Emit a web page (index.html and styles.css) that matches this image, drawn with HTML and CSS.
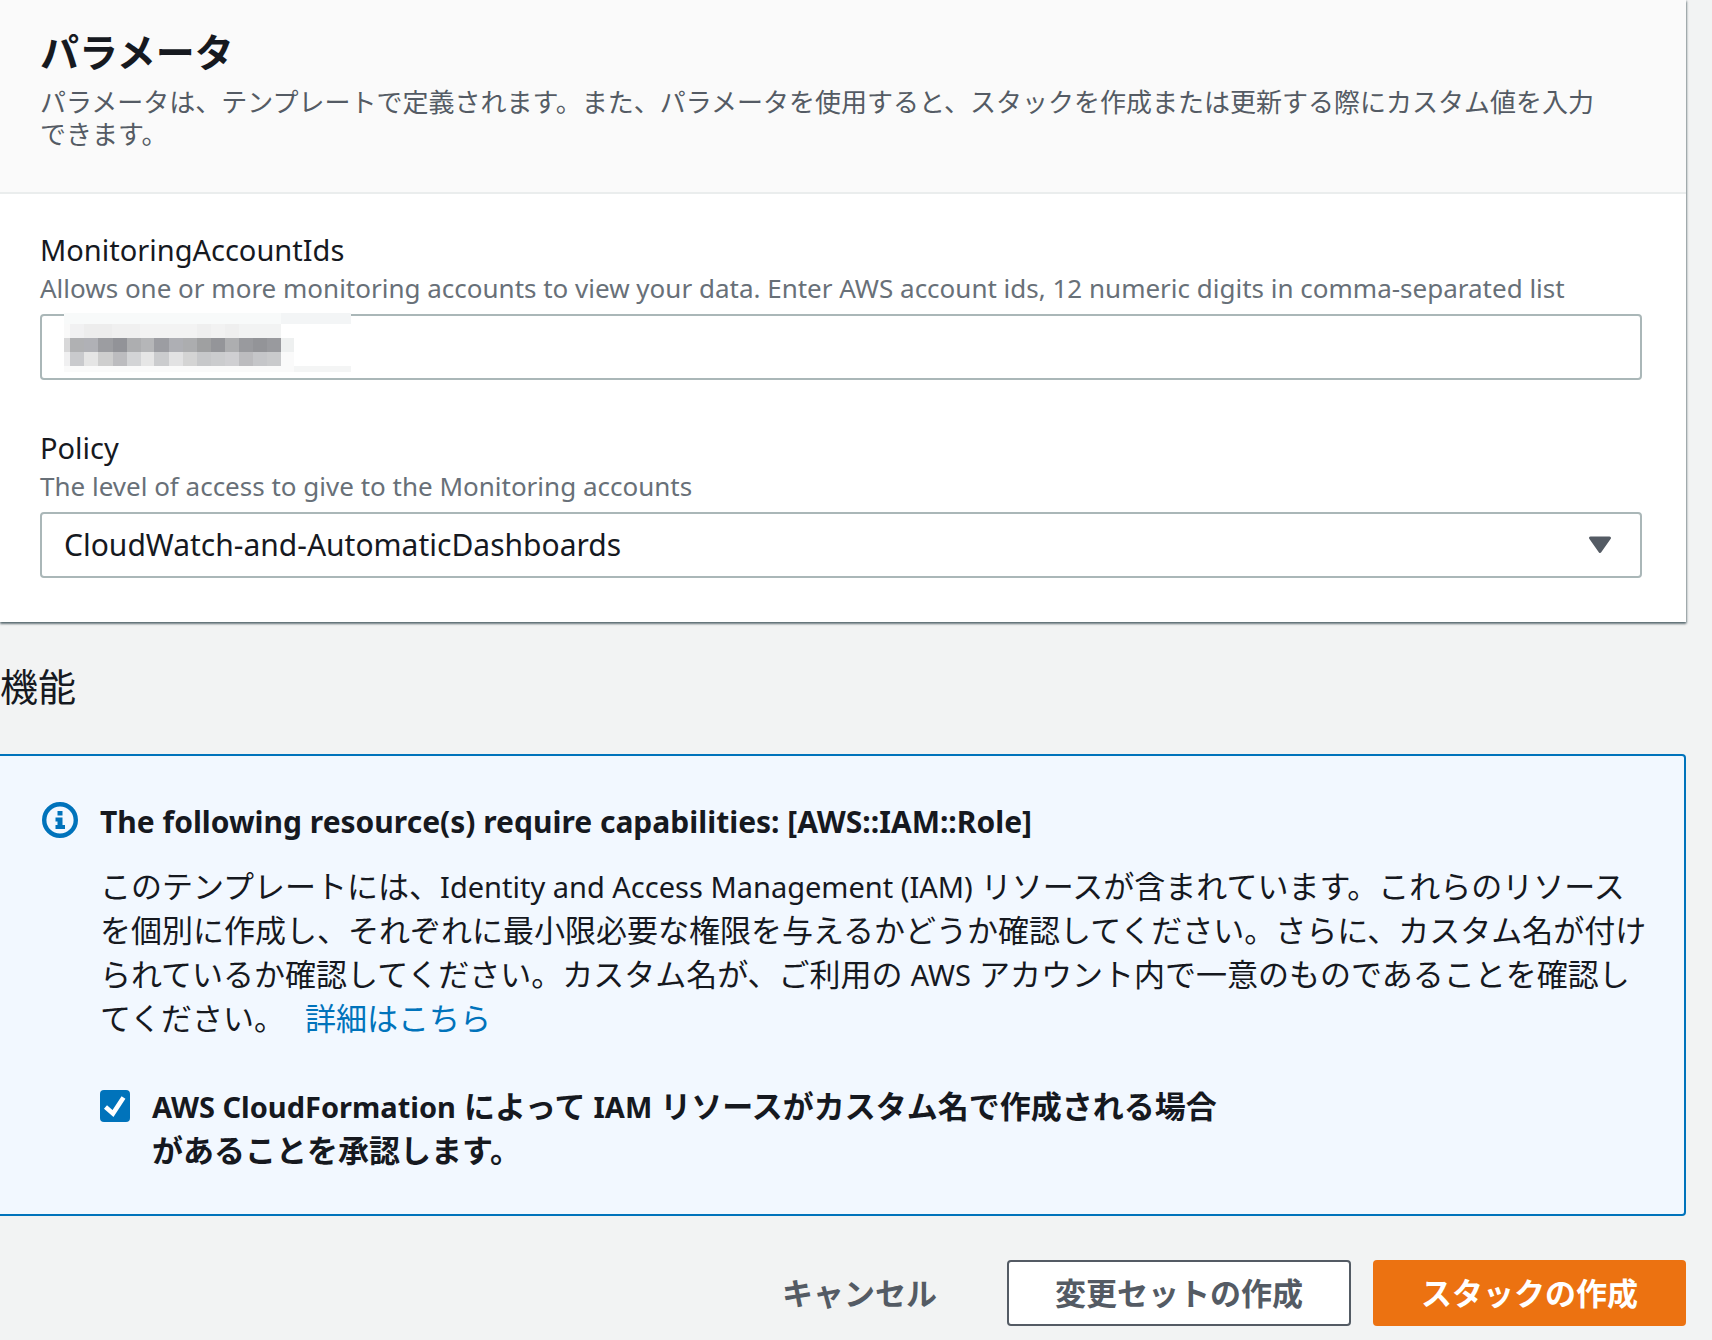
FILE: index.html
```html
<!DOCTYPE html>
<html lang="ja">
<head>
<meta charset="utf-8">
<meta name="viewport" content="width=device-width, initial-scale=1">
<title>スタックの作成</title>
<link rel="stylesheet" href="styles.css">
</head>
<body>
<main class="page">
  <section class="panel">
    <header class="panel-header">
      <h2 class="panel-title">パラメータ</h2>
      <p class="panel-description">パラメータは、テンプレートで定義されます。また、パラメータを使用すると、スタックを作成または更新する際にカスタム値を入力できます。</p>
    </header>
    <div class="panel-body">
      <div class="field">
        <label class="field-label" for="account-ids">MonitoringAccountIds</label>
        <p class="field-hint" id="account-ids-hint">Allows one or more monitoring accounts to view your data. Enter AWS account ids, 12 numeric digits in comma-separated list</p>
        <div class="control-wrap">
          <input class="control" type="text" id="account-ids" aria-describedby="account-ids-hint">
          <svg class="mosaic" width="287" height="59" viewBox="64 313 287 59" shape-rendering="crispEdges" aria-hidden="true">
            <path fill="#fff" d="M64 313h287v59H64z"/>
            <path fill="#f8fafa" d="M64 313h217v11H64z"/><path fill="#f3f5f6" d="M281 313h70v11h-70z"/>
            <path fill="#f9f9f9" d="M64 324h6v14h-6z"/>
            <path fill="#f1f1f2" d="M70 324h14v14H70z"/><path fill="#ededed" d="M84 324h28v14H84z"/><path fill="#f0f0f0" d="M112 324h28v14h-28z"/><path fill="#f3f3f3" d="M140 324h57v14h-57z"/><path fill="#efefef" d="M197 324h14v14h-14z"/><path fill="#f2f2f2" d="M211 324h14v14h-14z"/><path fill="#efefef" d="M225 324h14v14h-14z"/><path fill="#f2f3f3" d="M239 324h42v14h-42z"/>
            <path fill="#d8d8d9" d="M64 338h6v14h-6z"/><path fill="#b0b1b3" d="M70 338h14v14H70z"/><path fill="#b0b1b6" d="M84 338h14v14H84z"/><path fill="#9c9da1" d="M98 338h15v14H98z"/><path fill="#929398" d="M113 338h14v14h-14z"/><path fill="#adaeb0" d="M127 338h14v14h-14z"/><path fill="#b5b6b8" d="M141 338h13v14h-13z"/><path fill="#9c9da2" d="M154 338h15v14h-15z"/><path fill="#aeafb4" d="M169 338h14v14h-14z"/><path fill="#acadaf" d="M183 338h14v14h-14z"/><path fill="#9fa0a1" d="M197 338h14v14h-14z"/><path fill="#949599" d="M211 338h14v14h-14z"/><path fill="#adaeb0" d="M225 338h14v14h-14z"/><path fill="#999a9e" d="M239 338h14v14h-14z"/><path fill="#939498" d="M253 338h14v14h-14z"/><path fill="#999a9e" d="M267 338h14v14h-14z"/><path fill="#eef0f0" d="M281 338h13v14h-13z"/>
            <path fill="#f0f0f1" d="M64 352h6v14h-6z"/><path fill="#c9cacd" d="M70 352h14v14H70z"/><path fill="#e5e5e5" d="M84 352h14v14H84z"/><path fill="#cecece" d="M98 352h15v14H98z"/><path fill="#bcbcbf" d="M113 352h14v14h-14z"/><path fill="#d3d4d6" d="M127 352h14v14h-14z"/><path fill="#e6e6e6" d="M141 352h13v14h-13z"/><path fill="#cbccce" d="M154 352h15v14h-15z"/><path fill="#e2e2e3" d="M169 352h14v14h-14z"/><path fill="#d4d4d4" d="M183 352h14v14h-14z"/><path fill="#c7c8ca" d="M197 352h14v14h-14z"/><path fill="#cbccce" d="M211 352h14v14h-14z"/><path fill="#cfcfd2" d="M225 352h14v14h-14z"/><path fill="#bcbcbf" d="M239 352h14v14h-14z"/><path fill="#c5c6c9" d="M253 352h14v14h-14z"/><path fill="#c9cacc" d="M267 352h14v14h-14z"/><path fill="#fafafa" d="M281 352h13v14h-13z"/>
            <path fill="#fafafa" d="M64 366h230v6H64z"/><path fill="#f4f5f5" d="M294 366h57v6h-57z"/>
          </svg>
        </div>
      </div>
      <div class="field">
        <label class="field-label" for="policy">Policy</label>
        <p class="field-hint" id="policy-hint">The level of access to give to the Monitoring accounts</p>
        <div class="control-wrap">
          <select class="control" id="policy" aria-describedby="policy-hint">
            <option>CloudWatch-and-AutomaticDashboards</option>
          </select>
          <svg class="caret" width="24" height="18" viewBox="0 0 24 18" aria-hidden="true"><path d="M2.500 2h19L12 15.500z" fill="#545b64" stroke="#545b64" stroke-width="3" stroke-linejoin="round"/></svg>
        </div>
      </div>
    </div>
  </section>

  <h2 class="section-title">機能</h2>

  <section class="alert">
    <svg class="alert-icon" width="36" height="36" viewBox="0 0 36 36" aria-hidden="true">
      <circle cx="18" cy="18" r="15.800" fill="none" stroke="#0073bb" stroke-width="4.400"/>
      <path fill="#0073bb" d="M15.500 9h5v4.500h-5zM13.500 15.500h7v7.500h2.500v4H13.500v-4h2v-3.500h-2z"/>
    </svg>
    <div class="alert-content">
      <h3 class="alert-title">The following resource(s) require capabilities: [AWS::IAM::Role]</h3>
      <p class="alert-text">このテンプレートには、<span class="latin">Identity and Access Management (IAM)</span> リソースが含まれています。これらのリソースを個別に作成し、それぞれに最小限必要な権限を与えるかどうか確認してください。さらに、カスタム名が付けられているか確認してください。カスタム名が、ご利用の <span class="latin">AWS</span> アカウント内で一意のものであることを確認してください。<a class="link" href="#">詳細はこちら</a></p>
      <div class="acknowledge">
        <span class="checkbox-wrap">
          <input class="checkbox" type="checkbox" id="ack" checked>
          <svg class="check" width="30" height="32" viewBox="0 0 30 32" aria-hidden="true"><path d="M5.500 17l7.500 6.500L23.500 7.500" fill="none" stroke="#fff" stroke-width="4.600"/></svg>
        </span>
        <label class="acknowledge-label" for="ack"><span class="latin">AWS CloudFormation</span> によって <span class="latin">IAM</span> リソースがカスタム名で作成される場合があることを承認します。</label>
      </div>
    </div>
  </section>

  <div class="actions">
    <button class="button button-link" type="button">キャンセル</button>
    <button class="button button-normal" type="button">変更セットの作成</button>
    <button class="button button-primary" type="button">スタックの作成</button>
  </div>
</main>
</body>
</html>
```
FILE: styles.css
```css
* {
  box-sizing: border-box;
}

body {
  margin: 0;
  background: #f2f3f3;
  color: #16191f;
  font-family: "Noto Sans", "Noto Sans CJK JP", sans-serif;
  font-size: 29px;
  line-height: 44px;
}

h2,
h3,
p {
  margin: 0;
}

.page {
  padding: 0 26px 14px 0;
}

.panel {
  background: #fff;
  box-shadow: 0 2px 2px rgba(0, 28, 36, 0.5), 1px 1px 2px rgba(0, 28, 36, 0.3);
}

.panel-header {
  padding: 28px 76px 42px 40px;
  background: #fafafa;
  border-bottom: 2px solid #eaeded;
}

.panel-title {
  margin-bottom: 10px;
  font-size: 39px;
  line-height: 48px;
  font-weight: 700;
}

.panel-description {
  color: #545b64;
  font-size: 26px;
  line-height: 32px;
}

.panel-body {
  display: flex;
  flex-direction: column;
  gap: 46px;
  padding: 34px 44px 44px 40px;
}

.field-label {
  display: block;
  line-height: 44px;
}

.field-hint {
  margin-bottom: 10px;
  color: #687078;
  font-size: 26px;
  line-height: 32px;
}

.control-wrap {
  position: relative;
}

.control {
  display: block;
  width: 100%;
  height: 66px;
  padding: 0 22px;
  border: 2px solid #aab7b8;
  border-radius: 4px;
  background: #fff;
  color: #16191f;
  font: inherit;
  font-size: 30px;
  appearance: none;
}

.mosaic {
  position: absolute;
  top: -1px;
  left: 24px;
  pointer-events: none;
}

.caret {
  position: absolute;
  top: 24px;
  right: 30px;
  pointer-events: none;
}

.section-title {
  padding: 40px 0 44px;
  font-size: 38px;
  line-height: 48px;
  font-weight: 400;
}

.alert {
  display: flex;
  gap: 22px;
  padding: 44px 32px 42px 42px;
  border: 2px solid #0073bb;
  border-left: 0;
  border-radius: 0 4px 4px 0;
  background: #f2f8ff;
}

.alert-icon {
  flex: none;
  margin-top: 2px;
}

.alert-content {
  flex: 1;
}

.alert-title {
  margin-bottom: 20px;
  font-size: 30px;
  line-height: 44px;
  font-weight: 700;
}

.alert-text {
  font-size: 31px;
}

.latin {
  font-size: 29px;
  line-height: 1;
}

.link {
  margin-left: 20px;
  color: #0073bb;
  text-decoration: none;
}

.acknowledge {
  display: flex;
  gap: 22px;
  margin-top: 44px;
}

.checkbox-wrap {
  display: grid;
  flex: none;
  align-self: flex-start;
  margin-top: 6px;
}

.checkbox,
.check {
  grid-area: 1 / 1;
}

.checkbox {
  width: 30px;
  height: 32px;
  margin: 0;
  border-radius: 4px;
  background: #0073bb;
  appearance: none;
}

.check {
  pointer-events: none;
}

.acknowledge-label {
  max-width: 1080px;
  font-size: 31px;
  font-weight: 700;
}

.actions {
  display: flex;
  justify-content: flex-end;
  gap: 22px;
  margin-top: 44px;
}

.button {
  height: 66px;
  padding: 0 46px;
  border: 2px solid transparent;
  border-radius: 4px;
  font: inherit;
  font-size: 31px;
  font-weight: 700;
}

.button-link {
  background: transparent;
  color: #545b64;
}

.button-normal {
  border-color: #545b64;
  background: #fff;
  color: #545b64;
}

.button-primary {
  background: #ec7211;
  color: #fff;
}
```
